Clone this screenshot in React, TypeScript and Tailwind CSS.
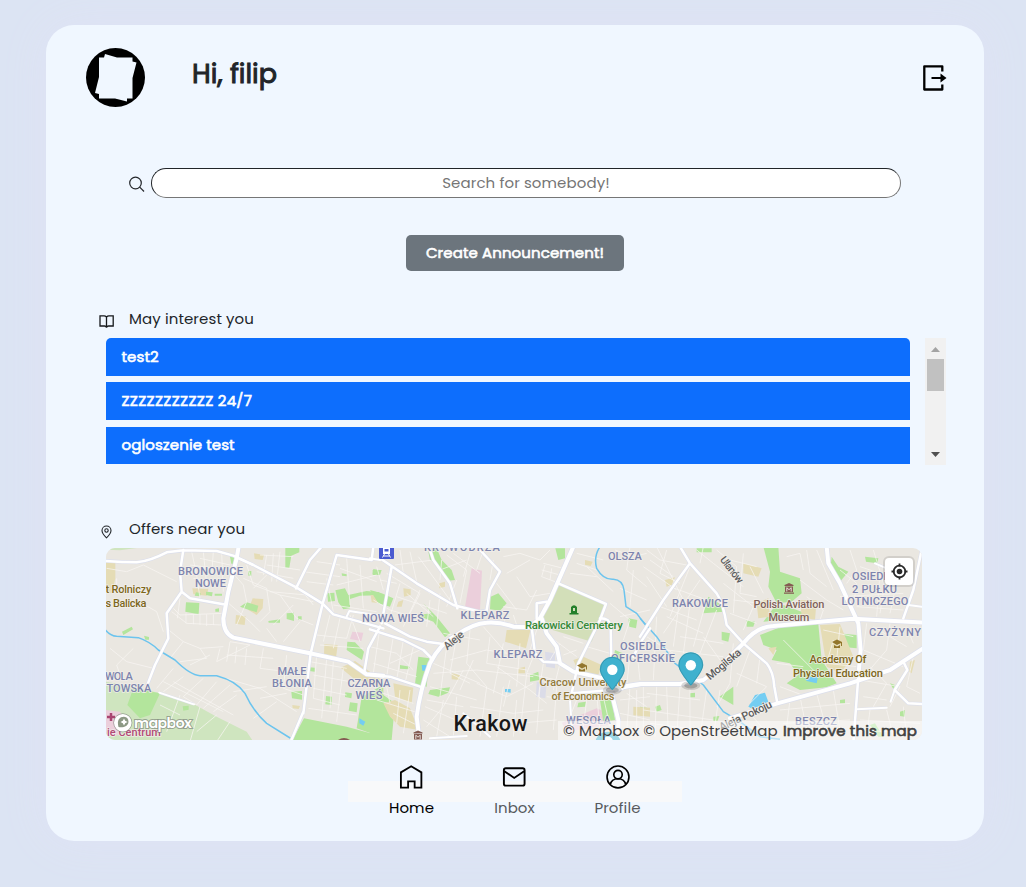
import React from 'react';

type Area = [string, string];
type Region = {
  transform: string;
  areas: Area[];
  lanes: string;
  streets: string;
  roads: string;
  avenues: string;
  river: string;
};

const GREEN = '#b3e59c';
const SAND = '#e5dcb5';
const PINK = '#ebcfdb';

const regions: Region[] = [
  {
    transform: 'translate(100 515) scale(.33333)',
    areas: [
      ['#cfe5bf', 'M15 500L100 515L180 535L282 568L350 605L440 650L460 680H15Z'],
      [GREEN, 'M100 520L180 535L150 600L120 610L82 570Z'],
      [GREEN, 'M612 610L740 635L850 665V680H575Z'],
      [GREEN, 'M785 545L850 510V668L770 640Z'],
      [PINK, 'M15 585L60 590L80 625L60 660L15 665Z'],
      [SAND, 'M18 142H46V190L36 235L18 230Z'],
      ['#cfe5bf', 'M18 99H110L60 106L18 104Z'],
      [GREEN, 'M258 262L298 264L296 298L256 290ZM390 125L410 120V150L394 146ZM445 168H454V182H445ZM66 350L95 335L99 343L70 360Z'],
      [GREEN, 'M556 99H598V112L574 122L568 158H556ZM682 235L703 233L705 258L684 260ZM706 226L735 220L745 240L800 228L838 232V241L780 242L750 252V280L730 283L715 262Z'],
      [GREEN, 'M505 318L540 313V323H506ZM560 295L582 293V318L560 312ZM594 304H605V315H594ZM725 175L740 178V184L726 182ZM742 380L765 382L792 410L786 435L740 405Z'],
      [GREEN, 'M574 530L606 528V554L576 550ZM628 457L644 458V470L628 468ZM678 543L696 545L694 570L676 568ZM750 562L773 565L770 592L746 587ZM736 532L756 535L754 550L735 546ZM820 162L840 166V180L818 177ZM346 282L357 280V290H346ZM248 574L266 572V584L250 587Z'],
      [SAND, 'M462 115L492 120L488 135L464 132ZM458 250L490 252L488 280L470 300L445 285ZM408 300L437 304L434 330L406 326ZM673 388L713 390L708 428L672 418ZM722 458L765 438L840 492V515L760 490ZM277 220L325 222L320 242L280 238ZM812 240H840V265L815 262ZM577 570L600 573L596 582L578 580Z'],
      [GREEN, 'M288 232L302 234L300 244L284 242ZM318 230L338 232L336 244L318 240ZM420 275L440 262L475 272L470 292L445 284ZM344 236H366V242H344ZM132 362L147 366V374H136Z'],
      [PINK, 'M757 350L790 353L784 378L750 372Z'],
      ['#74cdf2', 'M778 610L796 620L790 632L778 625Z'],
    ],
    lanes:
      'M20 160L80 170L130 150L230 200M100 250L170 290L190 350M50 190V230M215 290L260 325L365 330M240 250L232 310M258 295V325M280 298V328M300 298V330M320 298V333M340 298V330M220 280L240 300L370 295M275 110L290 180L300 250M300 130L390 150M310 110L320 210M340 110L335 180M365 115L370 230M270 150L385 165M280 190L380 205M395 170L430 210L440 260L410 330M440 150L460 210L540 240L640 260M380 260L450 320L480 350M430 190L500 220L510 290L480 320M500 120L490 180M520 115L515 200M540 110L530 200M500 150L600 165M480 120L580 125M470 170L580 190M460 220L500 180M510 230L620 240M610 170L720 185M620 200L700 210M650 140L720 150M690 200L680 240M600 220L640 270M540 240L590 310L640 330M580 270L520 330M200 340L250 380L210 430M250 380L300 400L320 430L240 440M300 400L370 395M330 420L270 450M360 400L350 440L450 390L390 380L380 440M410 395L405 445M440 400L435 450M380 420L520 430M490 400L480 460L560 470M560 420L550 520L610 540M360 485L480 520L590 590M400 530L500 515M480 550L560 535M460 610L530 560M250 485L190 530M310 490L250 545L290 570M350 500L290 570M220 460L170 520M390 510L310 580M410 540L340 590M220 500L400 600M190 500L370 590M240 540L200 650M180 570L240 600M300 575L270 680M350 600L290 650M390 620L350 680M100 400L50 450L60 480M30 400L80 440L160 460M630 440L740 460M650 420L640 550L720 570M680 430L665 610M700 440L690 580M730 460L710 620M640 480L750 500M640 520L740 540M625 580L770 600M660 390L790 400M650 360L740 370L760 300M690 300L670 380M720 310L700 400M750 300L780 380M700 270L830 290M680 190L700 290M740 130L750 270M780 150L790 280M720 160L830 200M710 210L830 180M600 320L550 380M500 340L530 380',
    streets: 'M415 130L460 150M740 305L748 288L850 304M178 533L282 568',
    roads:
      'M0 136Q60 142 110 142Q150 138 200 112L250 106L350 108L400 122L460 150L590 218L668 266L700 298L850 340M250 105L240 170L245 230L270 250L370 268M245 230L200 295L205 370L185 410L165 450L140 515M610 595L632 415L668 266L710 120L815 135L820 95M665 95L630 135L588 220M840 335L805 400L793 470M610 590L572 680',
    avenues: 'M416 95L410 130L385 230L370 310Q370 355 400 368L630 415L745 440L800 478L850 482',
    river: 'M15 343Q30 362 50 364L115 368Q150 380 175 405L225 435Q270 480 300 482L350 482Q410 498 435 535Q460 590 500 625L575 672',
  },
  {
    transform: 'translate(370 540) scale(.33333)',
    areas: [
      ['#d3dfb9', 'M567 130L710 190L665 305L520 262L515 230Z'],
      [PINK, 'M305 85L336 92L330 210L285 200Z'],
      [PINK, 'M575 548L680 505L715 520V555L590 575Z'],
      ['#dbdce8', 'M525 335L555 340V385L528 380ZM500 425L530 430L526 475L498 470Z'],
      [GREEN, 'M0 478L40 465L75 490L65 600H0ZM145 350L178 355L170 440L135 432ZM180 450L240 442L235 458L205 470L175 462ZM185 220L160 190L200 230L240 280L225 292L190 245L140 225Z'],
      [GREEN, 'M362 170L385 160L410 190L390 212L360 208ZM175 35L200 25L215 60L245 90L255 120L235 122L205 75L180 60ZM556 25H585V55L565 60ZM8 90H35L30 105H8ZM0 150L35 160L70 175L60 200L25 190ZM505 395L480 405V425L508 420Z'],
      [GREEN, 'M690 480L725 470L735 540L700 545ZM735 330L758 340L750 375L728 370ZM775 235L802 240L798 265L778 260ZM625 488L648 485L645 500L622 502ZM660 450H682L677 472L657 467ZM90 375L120 380L115 388L90 386ZM105 520L125 524L121 540L104 535ZM810 500L830 503L827 527L807 520Z'],
      [SAND, 'M410 270L482 268L468 325L405 305ZM610 360L640 350L695 375L685 405L625 395ZM40 490L75 480L120 505L145 570L90 560L60 530ZM70 430L130 443L125 490L75 470ZM100 145L122 148V165L102 170ZM208 130L225 125V140L208 145ZM645 60L668 65L662 78L645 74ZM85 185L100 180L95 200H80ZM445 385L465 380V400H445ZM790 500L840 503V530L790 526ZM245 400L270 405L268 420L245 418Z'],
      ['#74cdf2', 'M155 375L170 375L168 392L157 392ZM405 447L422 447V458L405 456Z'],
    ],
    lanes:
      'M90 30L100 100L180 160M120 35L140 125M145 50L240 180M75 75L190 60M50 100L150 160L120 220M90 130L60 230M110 160L190 230M150 150L100 260M180 180L170 260M210 160L200 260M60 210L180 245M80 170L230 220M210 90L290 60M230 45L290 90L270 190M250 40L330 100M260 120L230 200M215 60L210 120M300 40L280 110M340 30L320 90M370 60L360 120M400 50L450 40L510 60L540 30M410 100L480 60M380 130L440 210M400 200L470 210L500 150M440 110L480 170L540 160M520 70L580 85M515 90L570 105M525 75L515 110L555 125M545 85L540 120M410 215L400 260M430 225L440 255M620 40L700 60M620 70L680 90M600 100L680 110M650 80L730 155M780 20L770 90L830 140M735 30L790 50L830 40M750 145L830 180M790 90L780 200M720 190L780 240L760 300M750 230L840 210M580 290L640 310M540 290L620 350M570 310L540 360M580 345L620 330M650 320L720 340M500 270L480 330M490 350L470 400L560 420M520 370L505 470M570 370L550 450M450 310L440 440M400 310L370 460M360 290L350 370L470 390M300 270L290 370L350 440M260 290L240 400L300 430M230 320L210 470M190 370L330 430M190 400L320 390L490 410M240 360L350 330L470 350M180 440L320 480M170 480L280 500M220 280L330 300M340 260L410 340M280 390L220 500L170 560M310 360L270 450M380 380L480 450L530 490M320 430L410 470L490 430M470 400L450 580M420 420L400 500M510 440L500 580M530 470L620 480L580 580M560 440L550 570M300 500L430 520L520 510M310 540L440 550L560 540M350 440L330 590M400 440L380 590M440 480L430 590M260 470L250 590M220 480L200 590M165 500L280 550M160 540L240 590M50 440L60 490M90 450L80 550M120 450L100 580M10 450L130 490M20 480L150 520M70 520L140 555M10 370L140 410M0 320L80 340L130 390M30 260L10 400M70 290L50 410M100 300L80 420M130 320L105 430M150 330L60 370M30 120L80 130M20 80L40 150M10 180L60 210M760 330L840 300M780 340L770 440M800 330L810 420M770 460L830 500M750 480L840 470M780 440L770 580M800 450V580M820 440V580M750 520L840 540M680 460L690 570M650 480L640 560M700 470L720 560',
    streets: 'M0 55L30 60M180 595L290 588M600 480L605 560M280 520L360 590',
    roads:
      'M30 55L60 75L140 130L250 195L330 215L350 212M65 80L35 250M500 235L500 190L530 185M565 130L708 192L690 240L650 320L625 370L605 460M485 262L495 340L520 365L570 368M690 235Q720 235 722 260L725 420M0 268L100 300L160 330L185 355M45 250L120 290L170 305L220 312M0 405L60 410L150 440M180 30L190 60L240 130L262 205M330 30L390 95L360 150L350 210M605 460L725 450L840 430M840 265L810 310L790 350',
    avenues:
      'M150 610L140 530Q150 450 180 370Q210 310 260 285Q310 250 350 248Q390 245 430 260L480 262L510 235L540 180L610 20M515 235L530 280L560 320L570 370L610 395L700 415L740 440M725 460L745 540V610',
    river: 'M690 20Q670 50 680 85Q700 120 730 118Q758 120 762 150L768 200L800 220L830 260',
  },
  {
    transform: 'translate(640 540) scale(.33333)',
    areas: [
      [GREEN, 'M370 20H415L420 95L480 115L485 160L455 185L410 190L385 140L390 95Z'],
      [GREEN, 'M360 285L430 258L535 252L545 360L590 430L560 442L480 450L440 430L475 405L450 370L395 360L410 330L370 315Z'],
      [GREEN, 'M575 50L595 80L625 95L600 125L570 95ZM205 170L245 195L250 215L190 220ZM170 25H215V37H170ZM280 440V495L238 470ZM595 280L650 285V325L600 320ZM675 50L715 55L712 70L678 65ZM400 205L430 195L525 230L370 245ZM245 275L270 280L265 305L245 300ZM320 240L345 245L340 260H320Z'],
      [GREEN, 'M220 530L238 528L233 542H220ZM150 460L165 458V472H150ZM690 555L705 550L730 590H715ZM750 430L765 435L760 447ZM45 500L60 495L65 510L50 515ZM780 515L795 510V530L780 528ZM600 480L615 478V490H600Z'],
      [SAND, 'M310 70L365 85L355 110L310 100ZM540 255L600 252L640 350L600 400L560 380ZM350 190L385 175L390 230L355 235ZM480 180L530 180L525 240L485 230ZM75 120L105 112L95 135L80 140ZM385 325L410 320L400 345ZM810 365L825 360L815 400L808 395Z'],
      ['#74cdf2', 'M325 500L345 465L375 458L385 485L340 508ZM495 415L535 405L530 430L500 423Z'],
    ],
    lanes:
      'M20 30L60 60L140 75M80 30L60 100L120 130M30 60L100 110M50 20L130 180M10 80L110 150M20 110L80 200M150 80L90 230M180 120L70 280M90 140L200 180M60 200L170 240M80 230L190 280M120 170L100 320M150 190L130 340M200 180L160 320M230 210L180 340M50 230L40 420M20 290L100 340M80 330L250 350M120 290L250 310M190 290L240 360M170 30L220 70L310 140M190 20L180 70M230 30L290 80L280 220M270 60L350 80M310 40L300 160L350 170M250 130L340 200L310 270M270 220L350 250M280 180L360 190M330 80L370 160M440 50L480 40L490 90M500 30L510 100L560 140M530 30L580 150M480 120L560 180L610 210M500 170L550 210L540 240M630 30L650 90L620 130M660 80L720 100L710 230M700 30L740 160M600 90L650 130L640 200M650 100L780 120M600 170L790 160M650 200L790 210M740 100L720 220M780 80L750 220M550 270L640 290M580 300L560 370L650 380M600 260L590 360M680 250L670 330L790 380M700 260L800 320M750 250L740 330L680 400M800 260L820 310M690 380L740 430L700 500M660 420L780 440L750 500M670 470L740 480M820 350L800 440L840 460M280 310L270 430L230 500M290 400L380 440L330 490M330 330L290 440M360 350L350 430M410 370L490 380M430 300L530 400M420 440L500 470M450 480L440 560M480 470L500 570M530 460L560 570M580 450L600 570M420 510L630 490M430 550L630 540M200 450L180 590M120 440L110 590M50 440L45 590M20 460L180 480M10 510L220 540M80 440L85 590M150 440L150 590M30 550L180 570M240 450L220 590M300 560L400 570M330 520L390 590M660 540L840 550M690 510L680 590M740 510L760 590M790 500L800 590M650 570L840 580',
    streets: 'M705 70L740 85M650 508L740 503M752 485L764 450M805 195L845 200',
    roads:
      'M150 70L70 180L0 290M790 235L820 150L845 30M790 365L802 390L764 450L805 490L850 492M120 20L150 70L230 160Q250 190 260 255L310 310L380 370Q400 395 403 440L412 490M655 410L640 610',
    avenues:
      'M-70 450L-40 438L0 432L120 432L190 420L230 390L310 310Q350 260 400 258L640 236L850 248M560 20L565 70L600 130L655 250L662 330L655 410M270 535L412 490L630 430L750 390L850 325',
    river: 'M0 235L50 290L105 370L190 435L250 515L300 545L360 590L420 598',
  },
];

type LabelProps = { x: number; y: number; w: number; fill: string; children: string; size?: number; rotate?: number; weight?: number };

function Label({ x, y, w, fill, children, size = 11, rotate = 0, weight = 500 }: LabelProps) {
  return (
    <text
      x={x}
      y={y}
      textLength={w}
      lengthAdjust="spacing"
      textAnchor="middle"
      fontSize={size}
      fontWeight={weight}
      fill={fill}
      stroke="#f2efeb"
      strokeWidth="1.8"
      strokeOpacity=".75"
      strokeLinejoin="round"
      paintOrder="stroke"
      transform={`rotate(${rotate} ${x} ${y})`}
    >
      {children}
    </text>
  );
}

function Pin({ x, y }: { x: number; y: number }) {
  return (
    <g transform={`translate(${x} ${y})`}>
      <ellipse cx="0" cy="0" rx="9.500" ry="4.500" fill="#555" opacity=".22" />
      <ellipse cx="0" cy="0" rx="6.500" ry="3" fill="#444" opacity=".3" />
      <g transform="translate(-12.500 -33.300) scale(.925 .945)">
        <path
          d="M27 13.500C27 19.070 20.250 27 14.750 34.500C14.020 35.500 12.980 35.500 12.250 34.500C6.750 27 0 19.220 0 13.500A13.500 13.500 0 0 1 27 13.500Z"
          fill="#3fb1ce"
        />
        <path
          d="M26.300 13.500C26.300 19 19.700 26.700 14.300 34Q13.500 35 12.700 34C7.300 26.700 .7 19.200 .7 13.500A12.800 12.800 0 0 1 26.300 13.500Z"
          fill="none"
          stroke="#2c7c90"
          strokeOpacity=".5"
        />
      </g>
      <circle cy="-20.300" r="5.200" fill="#fff" />
    </g>
  );
}

function Cap({ x, y }: { x: number; y: number }) {
  return <path transform={`translate(${x} ${y})`} d="M-5-2L0-4.5L5-2V2H4V-1L0 1ZM-3 1L0 2.5L3 1V4H-3Z" fill="#92762c" />;
}

function Museum({ x, y, color = '#845b52' }: { x: number; y: number; color?: string }) {
  return (
    <g transform={`translate(${x} ${y})`} fill={color}>
      <path d="M-4.500-2.500V-3.500L0-5.500L4.500-3.500V-2.500ZM-4-2H4V3.500H-4ZM-5 4H5V5.200H-5Z" />
      <path d="M-2.200 3V-.8L0 1.200L2.200-.8V3" fill="none" stroke="#efebe6" strokeWidth=".9" />
    </g>
  );
}

const PLACE = '#7d84ae';
const OLIVE = '#7d671c';

function CityMap() {
  return (
    <svg viewBox="106 548 816 192" className="block h-[192px] w-[816px]" fontFamily="Roboto, 'Noto Sans', sans-serif">
      <rect x="106" y="548" width="816" height="192" fill="#eae7e1" />
      {regions.map((r, i) => (
        <g key={i} transform={r.transform}>
          {r.areas.map(([fill, d], j) => (
            <path key={j} d={d} fill={fill} />
          ))}
        </g>
      ))}
      {regions.map((r, i) => (
        <g key={i} transform={r.transform} fill="none" strokeLinejoin="round">
          <path d={r.lanes} stroke="#f8f6f3" strokeWidth="2.6" opacity=".85" />
          <path d={r.river} stroke="#6cc4ee" strokeWidth="4.5" />
        </g>
      ))}
      {regions.map((r, i) => (
        <g key={i} transform={r.transform} fill="none" stroke="#dcdfec" strokeLinejoin="round">
          <path d={r.streets} strokeWidth="8" />
          <path d={r.roads} strokeWidth="11" />
          <path d={r.avenues} strokeWidth="16" />
        </g>
      ))}
      {regions.map((r, i) => (
        <g key={i} transform={r.transform} fill="none" stroke="#fff" strokeLinejoin="round" strokeLinecap="round">
          <path d={r.streets} strokeWidth="6" />
          <path d={r.roads} strokeWidth="7.5" />
          <path d={r.avenues} strokeWidth="12" />
        </g>
      ))}

      <Label x={210.5} y={574.5} w={65} fill={PLACE}>BRONOWICE</Label>
      <Label x={210.5} y={587} w={31} fill={PLACE}>NOWE</Label>
      <Label x={128.5} y={593} w={46} fill={OLIVE}>t Rolniczy</Label>
      <Label x={126} y={606.5} w={41} fill={OLIVE}>s Balicka</Label>
      <Label x={119} y={680} w={28} fill={PLACE}>WOLA</Label>
      <Label x={129} y={692} w={45} fill={PLACE}>TOWSKA</Label>
      <Label x={292} y={675} w={29} fill={PLACE}>MAŁE</Label>
      <Label x={292} y={687} w={40} fill={PLACE}>BŁONIA</Label>
      <Label x={369} y={687} w={43} fill={PLACE}>CZARNA</Label>
      <Label x={369} y={699} w={27} fill={PLACE}>WIEŚ</Label>
      <Label x={393} y={622} w={62} fill={PLACE}>NOWA WIEŚ</Label>
      <Label x={462} y={550.5} w={76} fill={PLACE}>KROWODRZA</Label>
      <Label x={485} y={619} w={49} fill={PLACE}>KLEPARZ</Label>
      <Label x={518} y={657.5} w={49} fill={PLACE}>KLEPARZ</Label>
      <Label x={625} y={560} w={34} fill={PLACE}>OLSZA</Label>
      <Label x={643} y={649.5} w={46} fill={PLACE}>OSIEDLE</Label>
      <Label x={643} y={661.5} w={64} fill={PLACE}>OFICERSKIE</Label>
      <Label x={588.5} y={724} w={45} fill={PLACE}>WESOŁA</Label>
      <Label x={700} y={606.5} w={56} fill={PLACE}>RAKOWICE</Label>
      <Label x={874} y={580} w={44} fill={PLACE}>OSIEDLE</Label>
      <Label x={874.5} y={592.5} w={45} fill={PLACE}>2 PUŁKU</Label>
      <Label x={875} y={605} w={67} fill={PLACE}>LOTNICZEGO</Label>
      <Label x={895} y={636} w={52} fill={PLACE}>CZYŻYNY</Label>
      <Label x={816} y={725} w={42} fill={PLACE}>BESZCZ</Label>
      <Label x={574} y={629} w={98} fill="#358a39" size={11.5}>Rakowicki Cemetery</Label>
      <path d="M571 607Q574 603.500 577 607V613H578.500V614.500H569.500V613H571ZM573 608V611H575V608Z" fill="#24802b" fillRule="evenodd" />
      <Label x={583} y={686} w={87} fill="#927b3c">Cracow University</Label>
      <Label x={583} y={699.5} w={63} fill="#927b3c">of Economics</Label>
      <Label x={789} y={607.5} w={71} fill="#806158">Polish Aviation</Label>
      <Label x={789} y={621} w={41} fill="#806158">Museum</Label>
      <Label x={838} y={663} w={57} fill={OLIVE}>Academy Of</Label>
      <Label x={838} y={676.5} w={90} fill={OLIVE}>Physical Education</Label>
      <Cap x={582} y={667.500} />
      <Cap x={837} y={644} />
      <Museum x={789} y={588.5} />
      <Museum x={418} y={736} />
      <path d="M338 740Q344 736 350 740Z" fill="#845b52" />
      <Label x={456} y={643} w={23} fill="#686868" rotate={-40} size={11}>Aleje</Label>
      <Label x={726} y={667} w={42} fill="#5b5b5b" rotate={-40} size={11}>Mogilska</Label>
      <Label x={729} y={572} w={31} fill="#5b5b5b" rotate={52} size={10.5}>Ułanów</Label>
      <Label x={747} y={719} w={57} fill="#5b5b5b" rotate={-25} size={11}>Aleja Pokoju</Label>
      <Label x={490.5} y={730.5} w={74} fill="#181818" size={21.5}>Krakow</Label>

      <rect x="379" y="545" width="15" height="14" rx="1" fill="#4b5bd0" />
      <path d="M383 546H390V554H383Z" fill="#fff" />
      <path d="M384.500 549H388.500V551.500H384.500Z" fill="#4b5bd0" />
      <path d="M384.500 554L382.500 557.500M388.500 554L390.500 557.500M383.500 556H389.500" stroke="#fff" />

      <Label x={134} y={736} w={54} fill="#b24a76">ie Centrum</Label>
      <path d="M107 717H115M111 713V721" stroke="#a94471" strokeWidth="2.500" />
      <Pin x={612.3} y={690} />
      <Pin x={690.8} y={685.5} />
      <path d="M595.500 741C596.500 735.500 602 731.700 608 731.700S619.500 735.500 620.500 741Z" fill="#3fb1ce" />
      <circle cx="608" cy="741.500" r="5" fill="#fff" />

      <g stroke="#777d76" strokeOpacity=".65" fill="#fff" paintOrder="stroke">
        <circle cx="122.8" cy="722.7" r="8.800" strokeWidth="1.500" />
        <path d="M118.500 727C116.500 720 119.500 716.800 124 716.800A5.200 5.200 0 0 1 128.500 722C128 726.500 123 728 118.500 727Z" fill="#8c9984" stroke="none" />
        <path d="M124 718.500L125.200 720.800L127.500 722L125.200 723.200L124 725.500L122.800 723.200L120.500 722L122.800 720.800Z" fill="#fff" stroke="none" />
        <text x="134" y="727.500" textLength="58" fontFamily="Poppins, Inter, sans-serif" fontSize="14.500" fontWeight="600" strokeWidth="2">mapbox</text>
      </g>
    </svg>
  );
}

function ExitIcon() {
  return (
    <svg viewBox="0 0 26 28" className="h-[28px] w-[26px]" fill="none" stroke="#000" strokeWidth="2.300">
      <path d="M20.300 7.500V2.300H2.300V25.500H20.300V20.500" strokeLinejoin="round" />
      <path d="M9.500 14H20" strokeWidth="2" />
      <path d="M18.500 9.500V18.500L24.500 14Z" fill="#000" stroke="none" />
    </svg>
  );
}

function HomeIcon() {
  return (
    <svg viewBox="0 0 24 26" className="mr-[1px] h-[26px] w-[24px]" fill="none" stroke="#000" strokeWidth="1.900">
      <path d="M1.500 8.700L12.200 2.300L22.800 8.700V24.500H15.800V18H9V24.500H1.500Z" />
    </svg>
  );
}

function MailIcon() {
  return (
    <svg viewBox="0 0 24 26" className="mr-[1px] h-[26px] w-[24px]" fill="none" stroke="#000" strokeWidth="2">
      <rect x="1.500" y="4.500" width="21.500" height="18" rx="2" />
      <path d="M2 7.500L12.200 14.500L22.500 7.500" />
    </svg>
  );
}

function ProfileIcon() {
  return (
    <svg viewBox="0 0 26 26" className="h-[26px] w-[26px]" fill="none" stroke="#000" strokeWidth="1.700">
      <circle cx="13" cy="13.500" r="11.400" />
      <circle cx="13" cy="11" r="4.400" />
      <path d="M5 21.500C6.500 13.300 19.500 13.300 21 21.500" />
    </svg>
  );
}

const announcements = [
  { title: 'test2', box: 'h-[38px] rounded-t-[5px]' },
  { title: 'ZZZZZZZZZZZ 24/7', box: 'mt-[6px] h-[38px] tracking-[0.25px]' },
  { title: 'ogloszenie test', box: 'mt-[7px] h-[37px] pb-[1px]' },
];

const tabs = [
  { label: 'Home', icon: <HomeIcon />, color: 'text-black' },
  { label: 'Inbox', icon: <MailIcon />, color: 'text-[#575a5d]' },
  { label: 'Profile', icon: <ProfileIcon />, color: 'text-[#575a5d]' },
];

export default function App() {
  return (
    <div className="h-[887px] w-[1026px] overflow-hidden bg-[#dce4f3] pt-[25px] pl-[46px] font-[Poppins,Inter,sans-serif] text-[15px] tracking-[0.1px] text-[#212529]">
      <main className="flex h-[816px] w-[938px] flex-col rounded-[28px] bg-[#f0f7ff] shadow-[0_0_45px_0_#dfe2f5]">
        <header className="flex h-[143px] shrink-0 items-start pl-[40px] pt-[23px]">
          <svg viewBox="0 0 60 60" className="h-[60px] w-[60px] shrink-0">
            <circle cx="29.500" cy="29.500" r="29.500" fill="#000" />
            <path d="M19 6L31 9.500H46.500V13.500L50.500 14.500L46.500 30V50.500H41V53.500L29 50.500H13V46L9 45L13 29V9.500H18Z" fill="#f0f7ff" />
          </svg>
          <h1 className="ml-[46px] mt-[8px] flex-1 text-[27px] leading-[36px] font-normal tracking-normal [-webkit-text-stroke:1px_#212529]">Hi, filip</h1>
          <button className="mr-[36px] mt-[16px]" aria-label="Log out"><ExitIcon /></button>
        </header>

        <div className="flex h-[30px] shrink-0 items-center pl-[82px]">
          <svg viewBox="0 0 17 17" className="mt-[3px] mr-[6px] h-[17px] w-[17px]" fill="none" stroke="#24272b" strokeWidth="1.200">
            <circle cx="7.500" cy="7" r="5.800" />
            <path d="M11.700 11.200L16 15.500" />
          </svg>
          <input
            className="h-[30px] w-[750px] rounded-full border border-[#767676] border-t-[#212529] border-l-[#212529] bg-white pb-[2px] text-center tracking-[0.1px] outline-none placeholder:text-[#757575]"
            placeholder="Search for somebody!"
          />
        </div>

        <button className="mt-[37px] h-[36px] w-[218px] shrink-0 self-center rounded-[5px] bg-[#6c757d] text-white [-webkit-text-stroke:0.6px_white]">
          Create Announcement!
        </button>

        <div className="mt-[36px] flex h-[24px] shrink-0 items-center pl-[53px]">
          <svg viewBox="0 0 16 14" className="mt-[5px] h-[14px] w-[16px]" fill="none" stroke="#16191c" strokeWidth="1.300">
            <path d="M7.500 2Q6.500 .8 5 .8H1V11H5.500Q7 11 7.500 12.500V2Q8.500 .8 10 .8H14.200V11H9.500Q8 11 7.500 12.500" />
          </svg>
          <h2 className="ml-[14px]">May interest you</h2>
        </div>

        <section className="mt-[7px] flex h-[127px] shrink-0 pl-[60px]">
          <ul className="w-[804px]">
            {announcements.map((a) => (
              <li key={a.title} className={`flex items-center bg-[#0d6efd] pl-[15.5px] text-white [-webkit-text-stroke:0.6px_white] ${a.box}`}>
                {a.title}
              </li>
            ))}
          </ul>
          <div className="ml-[15px] flex h-[127px] w-[21px] flex-col items-center bg-[#f1f1f1]">
            <svg viewBox="0 0 21 21" className="h-[21px] w-[21px]"><path d="M6 14H15L10.500 9Z" fill="#a3a3a3" /></svg>
            <div className="h-[32px] w-[17px] bg-[#c1c1c1]" />
            <svg viewBox="0 0 21 21" className="mt-auto h-[21px] w-[21px]"><path d="M6 8H15L10.500 13Z" fill="#505050" /></svg>
          </div>
        </section>

        <div className="mt-[52px] flex h-[24px] shrink-0 items-center pl-[55px]">
          <svg viewBox="0 0 12 14" className="mt-[5px] h-[14px] w-[12px]" fill="none" stroke="#212529" strokeWidth="1.100">
            <path d="M5.500 12.800C2 9.500 1 7.500 1 5.500A4.500 4.500 0 0 1 10 5.500C10 7.500 9 9.500 5.500 12.800Z" />
            <circle cx="5.500" cy="5.500" r="1.700" />
          </svg>
          <h2 className="ml-[16px]">Offers near you</h2>
        </div>

        <section className="relative mt-[7px] ml-[60px] h-[192px] w-[816px] shrink-0 overflow-hidden rounded-[9px]">
          <CityMap />
          <button aria-label="Find my location" className="absolute top-[10px] right-[9px] flex h-[27px] w-[28px] items-center justify-center rounded-[4px] bg-white shadow-[0_0_0_2px_rgba(0,0,0,0.1)]">
            <svg viewBox="0 0 18 18" className="h-[18px] w-[18px]" fill="none" stroke="#292929" strokeWidth="1.800">
              <circle cx="9.500" cy="8.500" r="5.800" />
              <path d="M9.500 .5V3.500M9.500 13.500V16.500M1.500 8.500H4.500M14.500 8.500H17.500" />
              <circle cx="9.500" cy="8.500" r="2.800" fill="#292929" stroke="none" />
            </svg>
          </button>
          <div className="absolute right-0 bottom-0 flex h-[19px] w-[364px] items-center justify-between bg-white/50 pr-[5px] pl-[5px] leading-[19px] whitespace-nowrap text-[#404040]">
            <span className="tracking-[0.03px]">© Mapbox © OpenStreetMap</span>
            <span className="[-webkit-text-stroke:0.6px_#404040]">Improve this map</span>
          </div>
        </section>

        <nav className="relative mt-[24px] flex h-[55px] shrink-0 pl-[314px]">
          <div className="absolute top-[17px] left-[302px] h-[21px] w-[334px] bg-[#f8f9fa]" />
          {tabs.map((t) => (
            <a key={t.label} className={`relative flex w-[103px] flex-col items-center ${t.color}`}>
              {t.icon}
              <span className="mt-[8px] leading-[22px]">{t.label}</span>
            </a>
          ))}
        </nav>
      </main>
    </div>
  );
}
